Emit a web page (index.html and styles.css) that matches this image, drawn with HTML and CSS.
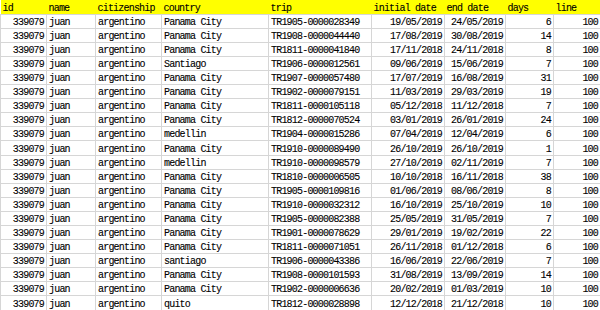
FILE: index.html
```html
<!DOCTYPE html>
<html>
<head>
<meta charset="utf-8">
<title>trips</title>
<link rel="stylesheet" href="styles.css">
</head>
<body>
<table class="sheet">
	<colgroup>
		<col class="c-id"><col class="c-name"><col class="c-cit"><col class="c-country"><col class="c-trip">
		<col class="c-date"><col class="c-date2"><col class="c-days"><col class="c-line">
	</colgroup>
	<thead>
		<tr><th>id</th><th>name</th><th>citizenship</th><th>country</th><th>trip</th><th>initial date</th><th>end date</th><th>days</th><th>line</th></tr>
	</thead>
	<tbody id="rows"></tbody>
</table>
<script>
	var data = [
		["Panama City","TR1905-0000028349","19/05/2019","24/05/2019",6],
		["Panama City","TR1908-0000044440","17/08/2019","30/08/2019",14],
		["Panama City","TR1811-0000041840","17/11/2018","24/11/2018",8],
		["Santiago","TR1906-0000012561","09/06/2019","15/06/2019",7],
		["Panama City","TR1907-0000057480","17/07/2019","16/08/2019",31],
		["Panama City","TR1902-0000079151","11/03/2019","29/03/2019",19],
		["Panama City","TR1811-0000105118","05/12/2018","11/12/2018",7],
		["Panama City","TR1812-0000070524","03/01/2019","26/01/2019",24],
		["medellin","TR1904-0000015286","07/04/2019","12/04/2019",6],
		["Panama City","TR1910-0000089490","26/10/2019","26/10/2019",1],
		["medellin","TR1910-0000098579","27/10/2019","02/11/2019",7],
		["Panama City","TR1810-0000006505","10/10/2018","16/11/2018",38],
		["Panama City","TR1905-0000109816","01/06/2019","08/06/2019",8],
		["Panama City","TR1910-0000032312","16/10/2019","25/10/2019",10],
		["Panama City","TR1905-0000082388","25/05/2019","31/05/2019",7],
		["Panama City","TR1901-0000078629","29/01/2019","19/02/2019",22],
		["Panama City","TR1811-0000071051","26/11/2018","01/12/2018",6],
		["santiago","TR1906-0000043386","16/06/2019","22/06/2019",7],
		["Panama City","TR1908-0000101593","31/08/2019","13/09/2019",14],
		["Panama City","TR1902-0000006636","20/02/2019","01/03/2019",10],
		["quito","TR1812-0000028898","12/12/2018","21/12/2018",10]
	];
	var html = "";
	for (var i=0,len=data.length;i<len;i++) {
		var r = data[i];
		html += "<tr><td class='num'>339079</td><td>juan</td><td>argentino</td><td>"+r[0]+"</td><td>"+r[1]+
			"</td><td class='num'>"+r[2]+"</td><td class='num'>"+r[3]+"</td><td class='num'>"+r[4]+"</td><td class='num'>100</td></tr>";
	}
	document.getElementById("rows").innerHTML = html;
</script>
</body>
</html>
```

FILE: styles.css
```css
* {
	padding:0;
	margin:0;
}
body {
	width:600px;
	height:310px;
	overflow:hidden;
	background:white;
}
table.sheet {
	width:600px;
	table-layout:fixed;
	border-collapse:collapse;
	font-family:"Liberation Mono", "Noto Sans CJK SC", monospace;
	font-size:10px;
	letter-spacing:-0.8px;
	color:#000;
}
col.c-id { width:46px; }
col.c-name { width:49px; }
col.c-cit { width:66px; }
col.c-country { width:107px; }
col.c-trip { width:103px; }
col.c-date { width:73px; }
col.c-date2 { width:61px; }
col.c-days { width:48px; }
col.c-line { width:47px; }
table.sheet tr {
	height:14.1px;
}
table.sheet th,
table.sheet td {
	height:auto;
	line-height:11px;
	padding:0 2px;
	border:1px solid #d6d6d6;
	white-space:nowrap;
	overflow:hidden;
	text-align:left;
	vertical-align:bottom;
	font-weight:normal;
	-webkit-text-stroke:0.1px #000;
}
table.sheet thead th {
	background:#ffff00;
	border-top:none;
	border-left:none;
	border-right:none;
}
table.sheet td.num {
	text-align:right;
}
```
